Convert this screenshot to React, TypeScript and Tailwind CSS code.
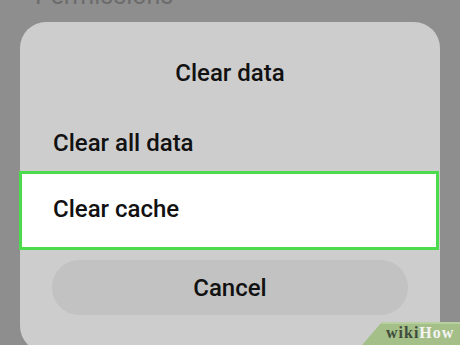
import React from 'react';

const WikiHowMark: React.FC = () => (
  <div className="absolute right-0 bottom-0 w-[98px] h-[23px]">
    <svg className="absolute inset-0" width="98" height="23" viewBox="0 0 98 23">
      <polygon points="20,0 98,0 98,23 0,23" fill="#a4bf88" />
      <polygon points="20,0 98,0 98,2 18,2" fill="#b8cfa0" />
    </svg>
    <div className="relative flex items-end h-full pl-[24px] pb-[4px] font-['Liberation_Serif',serif] font-bold text-[16px] leading-none tracking-[1px]">
      <span className="text-[#3f4b3b]">wiki</span>
      <span className="text-[#f4f4f4]">How</span>
    </div>
  </div>
);

const App: React.FC = () => {
  return (
    <div className="relative w-[460px] h-[345px] overflow-hidden bg-[#8e8e8e] font-['Roboto','Liberation_Sans',sans-serif] font-medium">
      <div className="h-[22px] overflow-hidden pl-[35px]">
        <div className="-mt-[19px] text-[25px] leading-[30px] font-normal text-[#6c6c6c]">Permissions</div>
      </div>

      <div className="mx-[20px] h-[330px] rounded-[26px] bg-[#cdcdcd] flex flex-col">
        <div className="mt-[36px] text-center text-[24px] leading-[30px] text-[#111]">Clear data</div>

        <div className="mt-[40px] pl-[33px] text-[24px] leading-[30px] text-[#111]">Clear all data</div>

        <div className="mt-[13px] -ml-[1px] w-[420px] h-[79px] border-[3px] border-[#4cdb4c] bg-white pl-[31px] pt-[20px]">
          <div className="text-[24px] leading-[30px] text-[#111]">Clear cache</div>
        </div>

        <div className="mt-[10px] mx-[32px] h-[55px] rounded-full bg-[#c2c2c2] flex items-center justify-center">
          <span className="text-[24px] leading-[30px] text-[#111]">Cancel</span>
        </div>
      </div>

      <WikiHowMark />
    </div>
  );
};

export default App;
